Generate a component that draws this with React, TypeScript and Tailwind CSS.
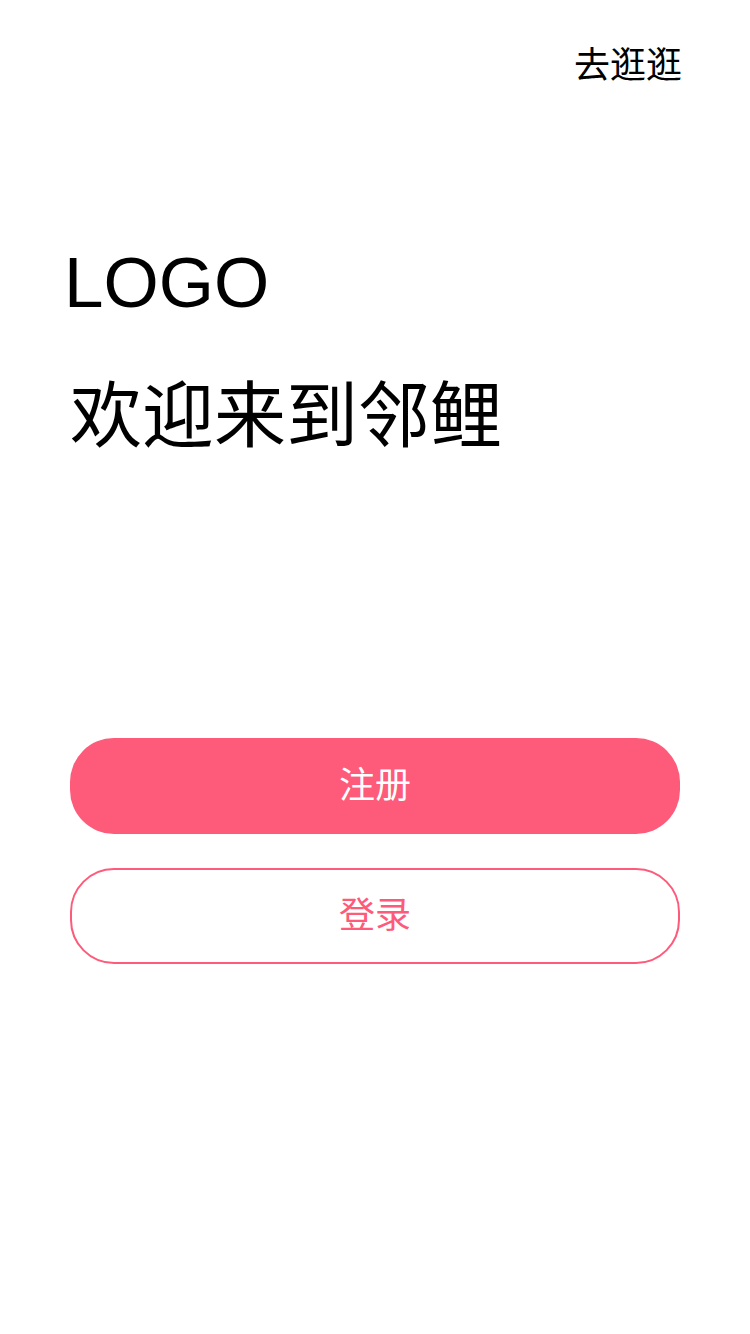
import React from "react";

const App = () => {
  return (
    <div className="w-[750px] h-[1334px] bg-white flex flex-col pl-[70px] pr-[68px] font-['Liberation_Sans','Noto_Sans_CJK_SC',sans-serif]">
      <div className="flex justify-end pt-[44px]">
        <span className="text-[36px] leading-[44px] text-black">去逛逛</span>
      </div>

      <div className="mt-[155px] -ml-[6px] text-[71px] leading-[80px] text-black">LOGO</div>
      <div className="mt-[53px] text-[72px] leading-[80px] text-black">欢迎来到邻鲤</div>

      <div className="mt-[282px] mr-[2px] flex flex-col gap-[34px]">
        <button className="h-[96px] rounded-[44px] bg-[#fe5a7a] text-white text-[36px]">
          注册
        </button>
        <button className="h-[96px] rounded-[44px] border-2 border-[#fe5a7a] text-[#fe5a7a] text-[36px]">
          登录
        </button>
      </div>
    </div>
  );
};

export default App;
